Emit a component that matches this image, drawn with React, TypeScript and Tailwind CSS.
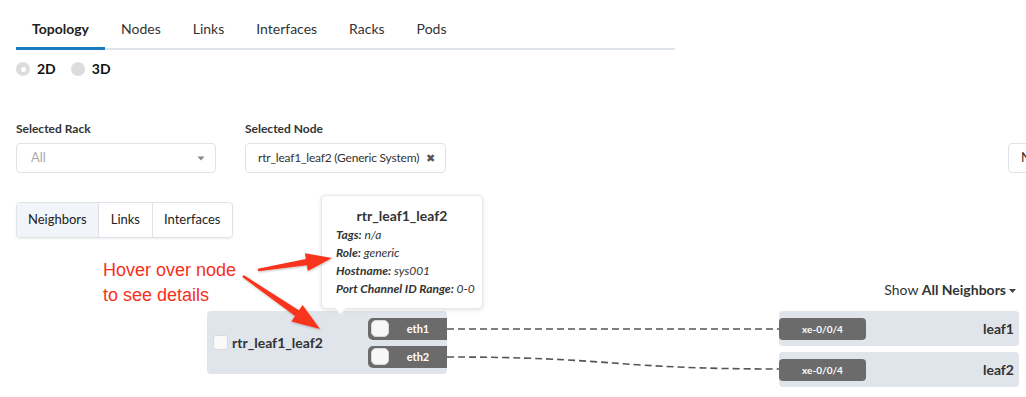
import React from "react";

function arrowPoints(tx: number, ty: number, hx: number, hy: number, headLen: number, headHalf: number, tailHalf: number, neckHalf: number) {
  const dx = hx - tx;
  const dy = hy - ty;
  const len = Math.sqrt(dx * dx + dy * dy);
  const ux = dx / len;
  const uy = dy / len;
  const px = -uy;
  const py = ux;
  const bx = hx - ux * headLen;
  const by = hy - uy * headLen;
  const pts: [number, number][] = [
    [tx + px * tailHalf, ty + py * tailHalf],
    [bx + px * neckHalf, by + py * neckHalf],
    [bx + px * headHalf, by + py * headHalf],
    [hx, hy],
    [bx - px * headHalf, by - py * headHalf],
    [bx - px * neckHalf, by - py * neckHalf],
    [tx - px * tailHalf, ty - py * tailHalf],
  ];
  return pts.map((p) => `${p[0].toFixed(1)},${p[1].toFixed(1)}`).join(" ");
}

function PortPill({ label }: { label: string }) {
  return (
    <div className="flex h-[22px] w-[79px] items-center rounded-l-[5px] bg-[#6b6b6b] pl-[3px]">
      <div className="h-[17px] w-[18px] rounded-[5px] border border-[#d8d8d8] bg-[#f7f7f7]" />
      <div className="flex-1 text-center text-[11px] font-bold leading-none text-white">{label}</div>
    </div>
  );
}

function NeighborBox({ name }: { name: string }) {
  return (
    <div className="flex h-[35px] w-[240px] items-start justify-between rounded-[4px] bg-[#e0e4eb]">
      <div className="mt-[7px] flex h-[22px] w-[87px] items-center justify-center rounded-[4px] bg-[#6b6b6b] text-[10px] font-bold text-white">
        xe-0/0/4
      </div>
      <div className="mr-[5px] mt-[8px] text-[14px] font-bold leading-[20px] text-[#333]">{name}</div>
    </div>
  );
}

export default function App() {
  const tabs = ["Topology", "Nodes", "Links", "Interfaces", "Racks", "Pods"];
  return (
    <div className="relative h-[397px] w-[1026px] overflow-hidden bg-white font-['Lato',sans-serif] text-[#333]">
      {/* Tabs */}
      <div className="ml-4 mt-[10px] flex w-[659px] border-b-2 border-[#dfe4ea]">
        {tabs.map((t, i) => (
          <div
            key={t}
            className={
              i === 0
                ? "-mb-[2px] border-b-[3px] border-[#1a7ac0] px-4 pb-[8px] pt-[9px] text-[14px] font-bold leading-[20px] text-[#222]"
                : "-mb-[2px] border-b-[3px] border-transparent px-4 pb-[8px] pt-[9px] text-[14px] leading-[20px] text-[#333]"
            }
          >
            {t}
          </div>
        ))}
      </div>

      {/* Radio */}
      <div className="ml-4 mt-[9px] flex items-center text-[14px] font-bold leading-[20px] text-[#111]">
        <div className="flex h-[14px] w-[14px] items-center justify-center rounded-full bg-[#dcdcdc]">
          <div className="h-[5px] w-[5px] rounded-full bg-white" />
        </div>
        <span className="ml-[7px]">2D</span>
        <div className="ml-[15px] h-[14px] w-[14px] rounded-full bg-[#dcdcdc]" />
        <span className="ml-[7px]">3D</span>
      </div>

      {/* Filters */}
      <div className="ml-4 mt-[42px] flex">
        <div className="w-[200px] shrink-0">
          <div className="text-[12px] font-bold leading-[16px] text-[#333]">Selected Rack</div>
          <div className="mt-[6px] flex h-[30px] items-center justify-between rounded-[4px] border border-[#dfe3e8] pl-[14px] pr-[10px]">
            <span className="text-[13px] text-[#aaa]">All</span>
            <svg width="8" height="5" viewBox="0 0 8 5">
              <path d="M0.5 0.5 L7.5 0.5 L4 4.5 Z" fill="#888" />
            </svg>
          </div>
        </div>
        <div className="ml-[29px] w-[201px] shrink-0">
          <div className="text-[12px] font-bold leading-[16px] text-[#333]">Selected Node</div>
          <div className="mt-[6px] flex h-[30px] items-center justify-between rounded-[4px] border border-[#dfe3e8] pl-[12px] pr-[10px]">
            <span className="whitespace-nowrap text-[12px] tracking-[-0.2px] text-[#333]">rtr_leaf1_leaf2 (Generic System)</span>
            <span className="text-[11px] text-[#555]">✖</span>
          </div>
        </div>
        <div className="ml-[562px] w-[200px] shrink-0">
          <div className="h-[16px]" />
          <div className="mt-[6px] flex h-[30px] items-center rounded-[4px] border border-[#dfe3e8] pl-[12px]">
            <span className="text-[13px] text-[#333]">N</span>
          </div>
        </div>
      </div>

      {/* Button group */}
      <div className="ml-4 mt-[29px] flex h-[36px] w-fit overflow-hidden rounded-[4px] border border-[#dfe3e8] text-[13px] text-[#222] shadow-[0_1px_2px_rgba(0,0,0,0.08)]">
        <div className="flex items-center bg-[#f1f4f8] px-[11px]">Neighbors</div>
        <div className="flex items-center border-l border-[#dfe3e8] px-[12px]">Links</div>
        <div className="flex items-center border-l border-[#dfe3e8] px-[11px]">Interfaces</div>
      </div>

      {/* Show all neighbors */}
      <div className="mt-[42px] flex justify-end pr-[10px] text-[14px] leading-[20px] text-[#333]">
        <span>Show&nbsp;</span>
        <span className="font-bold">All Neighbors</span>
        <svg className="ml-[3px] mt-[9px]" width="7" height="4" viewBox="0 0 7 4">
          <path d="M0 0 L7 0 L3.5 4 Z" fill="#444" />
        </svg>
      </div>

      {/* Canvas */}
      <div className="relative h-[97px]">
        <svg className="absolute left-0 top-0" width="1026" height="97">
          <path d="M447 29 L779 29" stroke="#555" strokeWidth="1.6" strokeDasharray="7 4" fill="none" />
          <path d="M447 57 C 613 57, 613 69, 779 69" stroke="#555" strokeWidth="1.6" strokeDasharray="7 4" fill="none" />
        </svg>

        <div className="absolute left-[207px] top-[11px] flex h-[63px] w-[240px] items-center justify-between rounded-[4px] bg-[#e0e4eb] pl-[6px]">
          <div className="flex items-center">
            <div className="h-[15px] w-[15px] rounded-[3px] border border-[#dadada] bg-[#f9f9f9]" />
            <span className="ml-[4px] text-[14px] font-bold text-[#333]">rtr_leaf1_leaf2</span>
          </div>
          <div className="flex flex-col gap-[6px]">
            <PortPill label="eth1" />
            <PortPill label="eth2" />
          </div>
        </div>

        <div className="absolute left-[779px] top-[11px] flex flex-col gap-[6px]">
          <NeighborBox name="leaf1" />
          <NeighborBox name="leaf2" />
        </div>
      </div>

      {/* Tooltip */}
      <div className="absolute left-[321px] top-[195px] w-[162px] rounded-[5px] border border-[#e6e8eb] bg-white pb-[10px] pl-[14px] pt-[10px] shadow-[0_1px_4px_rgba(0,0,0,0.12)]">
        <div className="pr-[14px] text-center text-[14px] font-bold leading-[20px] text-[#333]">rtr_leaf1_leaf2</div>
        <div className="text-[12px] italic leading-[18px] text-[#333]">
          <div><span className="font-bold">Tags:</span> n/a</div>
          <div><span className="font-bold">Role:</span> generic</div>
          <div><span className="font-bold">Hostname:</span> sys001</div>
          <div><span className="font-bold">Port Channel ID Range:</span> 0-0</div>
        </div>
        <div className="absolute bottom-[-5px] left-[14px] h-[9px] w-[9px] rotate-45 border-b border-r border-[#e6e8eb] bg-white" />
      </div>

      {/* Annotation */}
      <div className="absolute left-[103px] top-[258px] font-['Liberation_Sans',Arial,sans-serif] text-[18px] leading-[25px] text-[#f7301c]">
        <div>Hover over node</div>
        <div>to see details</div>
      </div>
      <svg className="absolute left-0 top-0" width="1026" height="397" style={{ pointerEvents: "none" }}>
        <defs>
          <filter id="sh" x="-20%" y="-20%" width="140%" height="140%">
            <feDropShadow dx="0.5" dy="1" stdDeviation="0.8" floodColor="#000" floodOpacity="0.25" />
          </filter>
        </defs>
        <polygon points={arrowPoints(258, 270, 332, 258, 26, 9, 1.2, 3.2)} fill="#f8361f" filter="url(#sh)" />
        <polygon points={arrowPoints(243, 276, 320, 329, 28, 10, 1.2, 3.4)} fill="#f8361f" filter="url(#sh)" />
      </svg>
    </div>
  );
}
